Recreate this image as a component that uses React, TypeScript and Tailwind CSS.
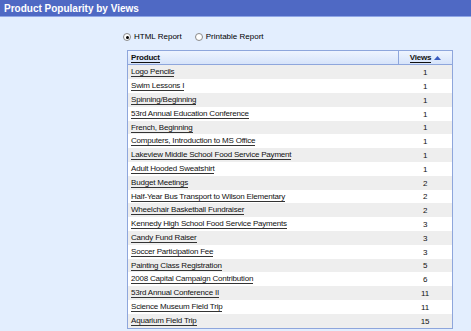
const rows: [string, number][] = [
  ["Logo Pencils", 1],
  ["Swim Lessons I", 1],
  ["Spinning/Beginning", 1],
  ["53rd Annual Education Conference", 1],
  ["French, Beginning", 1],
  ["Computers, Introduction to MS Office", 1],
  ["Lakeview Middle School Food Service Payment", 1],
  ["Adult Hooded Sweatshirt", 1],
  ["Budget Meetings", 2],
  ["Half-Year Bus Transport to Wilson Elementary", 2],
  ["Wheelchair Basketball Fundraiser", 2],
  ["Kennedy High School Food Service Payments", 3],
  ["Candy Fund Raiser", 3],
  ["Soccer Participation Fee", 3],
  ["Painting Class Registration", 5],
  ["2008 Capital Campaign Contribution", 6],
  ["53rd Annual Conference II", 11],
  ["Science Museum Field Trip", 11],
  ["Aquarium Field Trip", 15],
]

function Radio({ checked }: { checked?: boolean }) {
  return (
    <span className="w-[8px] h-[8px] rounded-full border border-[#8a8a8a] bg-white flex items-center justify-center">
      {checked && <span className="w-[3px] h-[3px] rounded-full bg-black" />}
    </span>
  )
}

export default function App() {
  return (
    <div className="w-[471px] h-[331px] bg-[#e3eefe] flex flex-col font-['Liberation_Sans',Arial,sans-serif] overflow-hidden">
      {/* title bar */}
      <div className="h-[17px] bg-[#4f69c4] border-b border-[#8fa6e6] flex items-center pl-[4px]">
        <span className="text-white font-bold text-[10px]">Product Popularity by Views</span>
      </div>

      {/* report type */}
      <div className="flex items-center gap-[13px] pl-[123px] mt-[14px] text-[8px] text-black">
        <label className="flex items-center gap-[3px]">
          <Radio checked />
          HTML Report
        </label>
        <label className="flex items-center gap-[3px]">
          <Radio />
          Printable Report
        </label>
      </div>

      {/* table */}
      <div className="ml-[127px] mt-[7px] w-[326px] border border-[#8ea6dc] text-[8px] tracking-[-0.2px] text-[#111]">
        <div className="flex h-[14px] bg-gradient-to-b from-[#eef4ff] to-[#d7e4fa] border-b border-[#8ea6dc] font-bold">
          <div className="flex-1 flex items-center pl-[3px]">
            <span className="leading-[9px] border-b border-[#111]">Product</span>
          </div>
          <div className="w-[54px] border-l border-[#8ea6dc] flex items-center justify-center gap-[3px]">
            <span className="leading-[9px] border-b border-[#111]">Views</span>
            <svg width="7" height="4" viewBox="0 0 7 4">
              <path d="M0 4 L3.5 0 L7 4 Z" fill="#3a5bc0" />
            </svg>
          </div>
        </div>
        {rows.map(([name, views], i) => (
          <div
            key={name}
            className={`flex items-center ${i % 5 === 4 ? "h-[13px]" : "h-[14px]"} ${
              i % 2 === 0 ? "bg-[#eeeeee]" : "bg-white"
            }`}
          >
            <div className="flex-1 pl-[3px] flex">
              <span className="leading-[9px] border-b border-[#333]">{name}</span>
            </div>
            <div className="w-[54px] text-center leading-[9px]">{views}</div>
          </div>
        ))}
      </div>
    </div>
  )
}
